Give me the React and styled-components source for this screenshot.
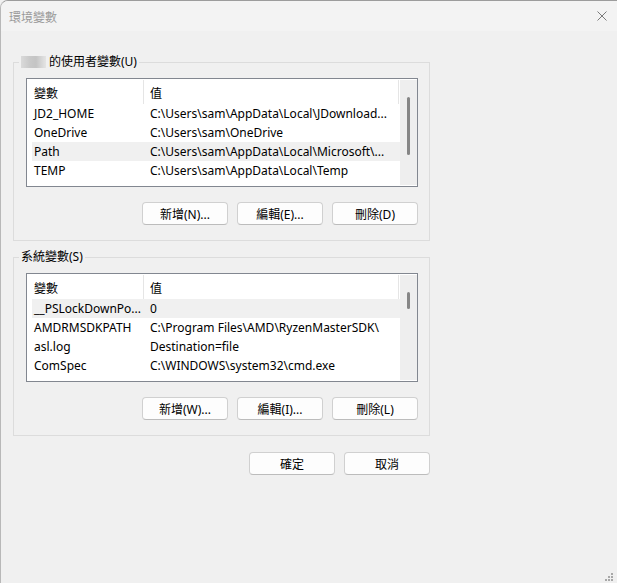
import React from 'react';
import styled, { createGlobalStyle } from 'styled-components';

const Global = createGlobalStyle`
  html, body { margin: 0; padding: 0; background: #f0f0f0; }
  body {
    font-family: "Noto Sans", "Noto Sans CJK TC", sans-serif;
    font-size: 12px;
    color: #000;
  }
  * { box-sizing: border-box; }
`;

const FONT = `"Noto Sans", "Noto Sans CJK TC", sans-serif`;

const Window = styled.div`
  position: relative;
  width: 617px;
  height: 583px;
  border-top: 1px solid #9c9c9c;
  border-left: 1px solid #b8b8b8;
  border-top-left-radius: 8px;
  background: #f0f0f0;
  overflow: hidden;
  display: flex;
  flex-direction: column;
`;

const TitleBar = styled.div`
  flex: none;
  height: 30px;
  background: #f3f3f3;
  display: flex;
  align-items: center;
  justify-content: space-between;
  padding: 0 10px 0 8px;
`;

const Title = styled.span`
  font-family: "Noto Sans CJK TC", sans-serif;
  font-size: 12px;
  color: #9a9a9a;
`;

const CloseBtn = styled.span`
  display: flex;
  width: 10px;
  height: 10px;
`;

const Body = styled.div`
  padding: 23px 0 0 12px;
  display: flex;
  flex-direction: column;
  width: 429px;
`;

const Group = styled.fieldset`
  margin: 0;
  width: 417px;
  min-inline-size: 0;
  border: 1px solid #dcdcdc;
  padding: 8px 11px 15px 12px;
  & + & { margin-top: 8px; }
`;

const Legend = styled.legend`
  padding: 0 2px;
  margin-left: -7px;
  height: 16px;
  line-height: 16px;
  font-family: ${FONT};
  font-size: 12px;
  white-space: nowrap;
`;

const Blur = styled.span`
  display: inline-block;
  width: 25px;
  height: 12px;
  margin-right: 3px;
  vertical-align: -2px;
  background: linear-gradient(90deg, #dadada 0%, #c9c9c9 35%, #c4c4c4 60%, #d9d9d9 85%, #e4e4e4 100%);
  filter: blur(0.6px);
`;

const List = styled.div`
  height: 109px;
  border: 1px solid #828790;
  background: #fff;
  display: flex;
  overflow: hidden;
`;

const Table = styled.div`
  flex: 1;
  min-width: 0;
  padding-left: 5px;
  overflow: hidden;
`;

const HeaderRow = styled.div`
  display: flex;
  height: 25px;
`;

const HeaderCell = styled.div`
  flex: none;
  width: ${p => p.$w}px;
  height: 24px;
  margin-top: 1px;
  padding-left: ${p => p.$pad}px;
  border-right: 1px solid #e5e5e5;
  display: flex;
  align-items: center;
  font-family: "Noto Sans CJK TC", sans-serif;
`;

const Row = styled.div`
  display: flex;
  height: 19px;
  align-items: center;
  background: ${p => (p.$hl ? '#f0f0f0' : 'transparent')};
  white-space: nowrap;
`;

const NameCell = styled.div`
  flex: none;
  width: 112px;
  padding-left: 2px;
  overflow: hidden;
  text-overflow: ellipsis;
`;

const ValueCell = styled.div`
  flex: 1;
  min-width: 0;
  padding-left: 6px;
  overflow: hidden;
  text-overflow: ellipsis;
`;

const ScrollTrack = styled.div`
  flex: none;
  width: 17px;
  margin: 1px 0;
  background: #eeeeee;
  padding: 17px 0 0 7px;
`;

const Thumb = styled.div`
  width: 3px;
  height: ${p => p.$h}px;
  background: #868686;
  border-radius: 1.5px;
`;

const ButtonRow = styled.div`
  display: flex;
  justify-content: flex-end;
  gap: 9px;
  margin-top: ${p => p.$mt}px;
`;

const Button = styled.button`
  width: 86px;
  height: 23px;
  padding: 0;
  background: #fdfdfd;
  border: 1px solid #d0d0d0;
  border-bottom-color: #bcbcbc;
  border-radius: 4px;
  font-family: ${FONT};
  font-size: 12px;
  color: #000;
`;

const Grip = styled.svg`
  position: absolute;
  right: 3px;
  bottom: 1px;
`;

const userVars = [
  ['JD2_HOME', 'C:\\Users\\sam\\AppData\\Local\\JDownload...'],
  ['OneDrive', 'C:\\Users\\sam\\OneDrive'],
  ['Path', 'C:\\Users\\sam\\AppData\\Local\\Microsoft\\...', true],
  ['TEMP', 'C:\\Users\\sam\\AppData\\Local\\Temp'],
];

const sysVars = [
  ['__PSLockDownPo...', '0', true],
  ['AMDRMSDKPATH', 'C:\\Program Files\\AMD\\RyzenMasterSDK\\'],
  ['asl.log', 'Destination=file'],
  ['ComSpec', 'C:\\WINDOWS\\system32\\cmd.exe'],
];

function VarList({ rows, thumb }) {
  return (
    <List>
      <Table>
        <HeaderRow>
          <HeaderCell $w={112} $pad={2}>變數</HeaderCell>
          <HeaderCell $w={255} $pad={6}>值</HeaderCell>
        </HeaderRow>
        {rows.map(([n, v, hl]) => (
          <Row key={n} $hl={hl}>
            <NameCell>{n}</NameCell>
            <ValueCell>{v}</ValueCell>
          </Row>
        ))}
      </Table>
      <ScrollTrack>
        <Thumb $h={thumb} />
      </ScrollTrack>
    </List>
  );
}

export default function App() {
  return (
    <>
      <Global />
      <Window>
        <TitleBar>
          <Title>環境變數</Title>
          <CloseBtn>
            <svg width="10" height="10" viewBox="0 0 10 10">
              <path d="M0.5 0.5 L9.5 9.5 M9.5 0.5 L0.5 9.5" stroke="#7a7a7a" strokeWidth="1" fill="none" />
            </svg>
          </CloseBtn>
        </TitleBar>
        <Body>
          <Group>
            <Legend><Blur />的使用者變數(U)</Legend>
            <VarList rows={userVars} thumb={58} />
            <ButtonRow $mt={15}>
              <Button>新增(N)...</Button>
              <Button>編輯(E)...</Button>
              <Button>刪除(D)</Button>
            </ButtonRow>
          </Group>
          <Group>
            <Legend>系統變數(S)</Legend>
            <VarList rows={sysVars} thumb={17} />
            <ButtonRow $mt={15}>
              <Button>新增(W)...</Button>
              <Button>編輯(I)...</Button>
              <Button>刪除(L)</Button>
            </ButtonRow>
          </Group>
          <ButtonRow $mt={16}>
            <Button>確定</Button>
            <Button>取消</Button>
          </ButtonRow>
        </Body>
        <Grip width="9" height="9" viewBox="0 0 9 9">
          <g fill="#a8a8a8">
            <rect x="6" y="0" width="2" height="2" />
            <rect x="3" y="3" width="2" height="2" />
            <rect x="6" y="3" width="2" height="2" />
            <rect x="0" y="6" width="2" height="2" />
            <rect x="3" y="6" width="2" height="2" />
            <rect x="6" y="6" width="2" height="2" />
          </g>
        </Grip>
      </Window>
    </>
  );
}
